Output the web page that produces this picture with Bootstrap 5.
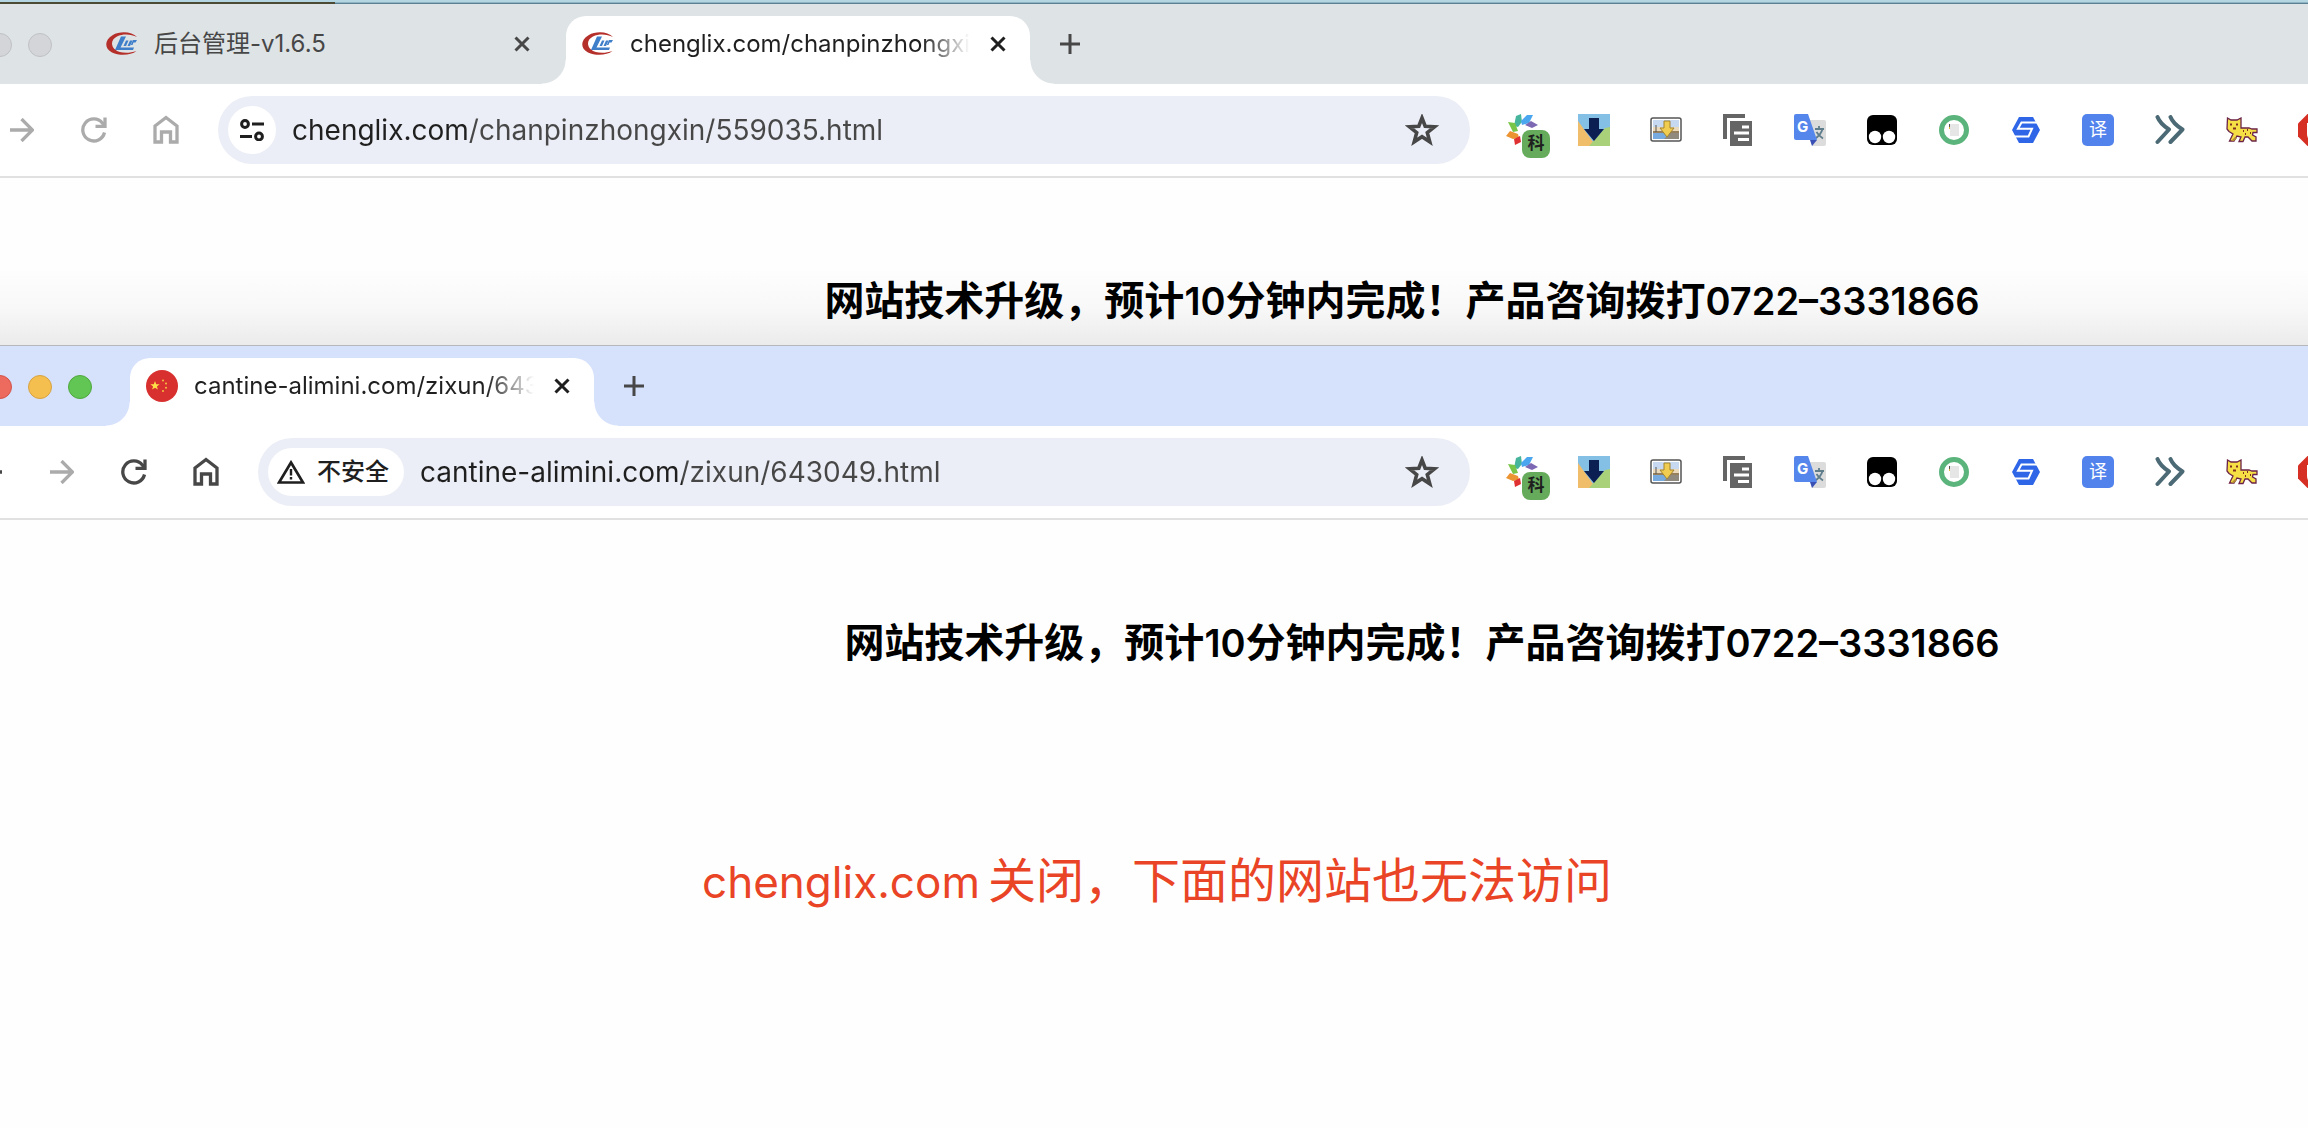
<!DOCTYPE html>
<html lang="zh-CN">
<head>
<meta charset="utf-8">
<meta name="viewport" content="width=device-width, initial-scale=1">
<title>网站技术升级</title>
<link href="https://cdn.jsdelivr.net/npm/bootstrap@5.3.0/dist/css/bootstrap.min.css" rel="stylesheet">
<style>
  body { font-family: Inter, "Noto Sans CJK SC", sans-serif; color: #1f1f1f; background: #fefefe; overflow-x: hidden; }
  button, input { font-family: inherit; }
  svg { display: block; flex: none; }
  .desktop-edge { height: 4px; background: linear-gradient(#b3d6e2 0 2px, #8fb4c2 2px 3px, #5c8192 3px 4px); }
  .desktop-edge span { display: block; width: 335px; height: 4px; background: linear-gradient(#b3d6e2 0 2px, #4d4a33 2px 4px); }
  .browser { overflow: hidden; }
  .tab-strip { height: 80px; padding-top: 12px; background: #dee3e6; }
  .is-front .tab-strip { background: #d6e1fc; }
  .is-front { border-top: 1px solid #b5b7bb; }
  .lights { width: 90px; height: 58px; gap: 16px; padding-right: 38px; flex: none; }
  .is-front .lights { width: 130px; }
  .light { width: 24px; height: 24px; flex: none; border-radius: 50%; border: 1px solid #c0c1c4; background: #d4d5d9; padding: 0; }
  .light.l-red { background: #ed6a5e; border-color: #d1554a; }
  .light.l-amber { background: #f5bf4f; border-color: #d6a243; }
  .light.l-green { background: #61c654; border-color: #51a73e; }
  .b-tab { position: relative; width: 464px; height: 68px; padding: 0 12px 12px 16px; gap: 16px; flex: none; font-size: 24px; line-height: 36px; color: #474747; }
  .b-tab.idle { width: 476px; }
  .b-tab.idle .tab-x { margin-right: 12px; }
  .b-tab.current { background: #fff; border-radius: 20px 20px 0 0; color: #1f1f1f; }
  .b-tab.current::before, .b-tab.current::after { content: ""; position: absolute; bottom: 0; width: 24px; height: 24px; }
  .b-tab.current::before { right: 100%; background: radial-gradient(circle at 0 0, transparent 23px, #fff 24px); }
  .b-tab.current::after { left: 100%; background: radial-gradient(circle at 100% 0, transparent 23px, #fff 24px); }
  .tab-title { flex: 1 1 0; min-width: 0; overflow: hidden; white-space: nowrap; color: inherit; text-decoration: none; }
  .current .tab-title { margin-right: -8px; -webkit-mask-image: linear-gradient(to left, transparent, #000 48px); mask-image: linear-gradient(to left, transparent, #000 48px); }
  .icon-btn { display: flex; align-items: center; justify-content: center; border: 0; padding: 0; background: none; color: #474747; flex: none; }
  .tab-x { width: 40px; height: 40px; color: inherit; }
  .tab-plus { width: 56px; height: 56px; margin-left: 12px; }
  .toolbar { height: 94px; background: #fff; border-bottom: 2px solid #e1e1e1; padding: 12px 0; }
  .nav-keys { margin-left: -86px; }
  .is-front .nav-keys { margin-left: -46px; }
  .nav-keys .icon-btn, .ext-row .icon-btn { width: 72px; height: 68px; }
  .nav-keys .dim { color: #ababab; }
  .omnibox { height: 68px; margin: 0 16px; padding: 0 31px 0 10px; border-radius: 34px; background: #ebeef6; gap: 16px; min-width: 0; }
  .chip { height: 48px; min-width: 48px; border-radius: 24px; background: #fff; color: #1f1f1f; font-size: 24px; line-height: 36px; font-weight: 500; }
  .is-front .chip { padding: 0 15px 0 9px; gap: 12px; }
  .url-box { flex: 1 1 0; min-width: 0; border: 0; padding: 0; outline: 0; height: 48px; font-size: 28px; line-height: 40px;
    color: transparent; -webkit-background-clip: text; background-clip: text; background-image: linear-gradient(to right, #1f1f1f var(--host), #474747 var(--host)); }
  .url-a { --host: 176px; }
  .url-b { --host: 262px; }
  .ext-row { margin-right: -42px; flex: none; }
  .ext-pic { position: relative; }
  .ke-badge { position: absolute; right: -12px; bottom: -12px; width: 28px; height: 28px; border-radius: 8px; background: #66ab5b; color: #1f1f1f; font-size: 17px; line-height: 27px; font-weight: 700; }
  .g-badge { position: absolute; left: 3px; top: 4px; color: #fff; font-size: 15px; line-height: 18px; font-weight: 700; }
  .yi-badge { width: 32px; height: 32px; border-radius: 5px; background: #5283ec; color: #fff; font-size: 18px; line-height: 31px; }
  .web-page { padding-top: 89px; height: 167px; background: linear-gradient(#fefefe 90px, #f8f8f8 130px, #ebebeb 167px); padding-left: 496px; }
  .is-front .web-page { height: auto; background: #fefefe; padding-left: 536px; }
  .notice { font-size: 40px; line-height: 68px; font-weight: 600; color: #000; margin: 0; white-space: nowrap; }
  .notice span { font-size: 38px; }
  .remark { margin: 0; padding: 168px 0 0 6px; font-size: 48px; line-height: 72px; color: #ea4426; white-space: nowrap; }
  .remark span { font-size: 44px; margin-right: 8px; }
</style>
<script src="https://cdn.jsdelivr.net/npm/bootstrap@5.3.0/dist/js/bootstrap.bundle.min.js"></script>
</head>
<body>
<svg width="0" height="0" class="position-absolute" aria-hidden="true">
  <symbol id="i-x" viewBox="0 0 16 16"><path d="M1.500 1.500 14.500 14.500M14.500 1.500 1.500 14.500" stroke="currentColor" stroke-width="3" fill="none"/></symbol>
  <symbol id="i-plus" viewBox="0 0 20 20"><path d="M10 0V20M0 10H20" stroke="currentColor" stroke-width="3" fill="none"/></symbol>
  <symbol id="i-back" viewBox="0 0 24 24"><path d="M24 12H2M12 1 1.500 12 12 23" stroke="currentColor" stroke-width="3.300" fill="none"/></symbol>
  <symbol id="i-fwd" viewBox="0 0 24 24"><path d="M0 12H22M11.500 1 22.500 12 11.500 23" stroke="currentColor" stroke-width="3.300" fill="none"/></symbol>
  <symbol id="i-reload" viewBox="0 0 26 26"><path d="M23.500 15.500A11 11 0 1 1 21.500 6.200L24 9" stroke="currentColor" stroke-width="3.300" fill="none"/><path d="M24 .500V9.300H14.500" stroke="currentColor" stroke-width="3.300" fill="none"/></symbol>
  <symbol id="i-home" viewBox="0 0 26 30"><path d="M2 11 13 2.500 24 11V27H17.500V17H8.500V27H2Z" stroke="currentColor" stroke-width="3.300" fill="none"/></symbol>
  <symbol id="i-tune" viewBox="0 0 24 22"><g stroke="currentColor" stroke-width="3" fill="none"><circle cx="5" cy="5" r="3.400"/><path d="M12 5H24M0 17.500H12"/><circle cx="19" cy="17.500" r="3.400"/></g></symbol>
  <symbol id="i-warn" viewBox="0 0 28 24"><path d="M14 2.500 26 22.500H2Z" stroke="currentColor" stroke-width="2.700" fill="none"/><path d="M14 9V15.500M14 17V19.500" stroke="currentColor" stroke-width="2.400"/></symbol>
  <symbol id="i-star" viewBox="0 0 34 32"><path d="M17 4 20.200 12.200 29.500 12.800 22.300 18.600 24.800 27.800 17 22.700 9.200 27.800 11.700 18.600 4.500 12.800 13.800 12.200Z" stroke="currentColor" stroke-width="3.600" fill="none"/></symbol>
  <symbol id="i-cl" viewBox="0 0 32 24">
    <path d="M31 5C26-.500 14-1.200 6.500 3.200-2 8-1.500 17 6 20.500c7.500 3.600 19 3 24.500-1.500C22 22 13 21 9 17.500 4.500 13.500 5 7.500 11 4.500 17 1.600 25 2 31 5Z" fill="#b5302b"/>
    <path d="M15 4.500H20L14.500 15.500H28L27 18H9Z" fill="#3f7fc9"/>
    <path d="M20 8.500H22.500L20 14H17.500ZM24 8.500H26.500L24 14H21.500ZM27 8H31L29.500 10.500H27.500L26.500 13H24.800Z" fill="#3f7fc9"/>
  </symbol>
  <symbol id="i-cn" viewBox="0 0 32 32"><circle cx="16" cy="16" r="16" fill="#d8302f"/><path d="M9 11 10.200 14.300H13.600L10.900 16.400 11.900 19.600 9 17.700 6.100 19.600 7.100 16.400 4.400 14.300H7.800Z" fill="#fde047"/><g fill="#f5c242"><circle cx="17" cy="10.500" r="1"/><circle cx="20" cy="13.500" r="1"/><circle cx="20" cy="17.800" r="1"/><circle cx="17" cy="21" r="1"/></g></symbol>
  <symbol id="e-petal" viewBox="0 0 32 32">
    <path d="M8 12 10 2 15 0 16 8 12 13Z" fill="#47b59c"/><path d="M15 7 21 1 27 1 23 9 16 11Z" fill="#4aa6ee"/><path d="M19 11 25 7 32 11 26 14Z" fill="#7c68b3"/><path d="M2 8 9 9 12 17 7 18Z" fill="#79c547"/><path d="M0 22 4 17 12 20 13 24 7 25Z" fill="#ec9431"/><path d="M8 25 14 22 15 28 9 31Z" fill="#df3032"/>
  </symbol>
  <symbol id="e-down" viewBox="0 0 32 32"><path d="M0 0H32V32H0Z" fill="#84bfe6"/><path d="M0 7 18 32H0Z" fill="#f0be6b"/><path d="M32 13V32H11L27 14Z" fill="#a9d17a"/><path d="M11 4H21V15H26L16 27 6 15H11Z" fill="#0c1f52"/></symbol>
  <symbol id="e-pic" viewBox="0 0 32 26"><rect x="1" y="1" width="30" height="23" rx="2" fill="#fff" stroke="#555" stroke-width="1.500"/><path d="M3 3H29V13H3Z" fill="#c7d9f0"/><path d="M3 10H29V14H3Z" fill="#ead9bb"/><path d="M3 14H29V17H3Z" fill="#96805e"/><path d="M3 16H14L20 22H3Z" fill="#77aade"/><path d="M14 22 20 16H29V22Z" fill="#8f8a7d"/><path d="M6 8V15" stroke="#555"/><path d="M14 4H20V11H24L17 20 10 11H14Z" fill="#f0cd50" stroke="#a38431"/></symbol>
  <symbol id="e-copy" viewBox="0 0 30 32"><path d="M2 25V2H22" stroke="#656565" stroke-width="4" fill="none"/><path d="M7 7H29V32H7Z" fill="#656565"/><path d="M19 13H26M11 19H26M15 25.500H26" stroke="#fff" stroke-width="2.800"/></symbol>
  <symbol id="e-gt" viewBox="0 0 32 32"><path d="M14 6H30Q32 6 32 8V30Q32 32 30 32H18Z" fill="#dcdcdc"/><path d="M21 15H30M25 12V15M28.500 15Q27 21 20.500 25M22.500 18Q25 22 29 24.500" stroke="#607d8b" stroke-width="1.800" fill="none"/><path d="M16 26H23L18 32Z" fill="#3a50b5"/><path d="M2 0H14L23 26H2Q0 26 0 24V2Q0 0 2 0Z" fill="#5586ec"/></symbol>
  <symbol id="e-tamper" viewBox="0 0 30 30"><rect width="30" height="30" rx="6" fill="#000"/><circle cx="8" cy="22" r="6.200" fill="#fff"/><circle cx="22" cy="22" r="6.200" fill="#fff"/></symbol>
  <symbol id="e-ring" viewBox="0 0 30 30"><circle cx="15" cy="15" r="12.500" fill="#fff" stroke="#5bb47c" stroke-width="5"/><rect x="11" y="9" width="9" height="12" fill="#e6e6e6"/><path d="M10.500 9V12" stroke="#555"/><path d="M10.500 12V14" stroke="#e2b93b"/></symbol>
  <symbol id="e-s" viewBox="0 0 28 28"><path d="M7 1H21L28 14 21 27H7L0 14Z" fill="#2f66e8"/><path d="M26 6.500H9.500L6 12.800H20L16.500 20.500H2" stroke="#fff" stroke-width="2" fill="none"/></symbol>
  <symbol id="e-chev" viewBox="0 0 30 30"><path d="M2.500 2Q5 8.500 14 14.500L2.500 27M15.500 2Q18 8.500 27.500 14.500L15.500 27" stroke="#4c6a75" stroke-width="4" stroke-linecap="round" stroke-linejoin="round" fill="none"/></symbol>
  <symbol id="e-cat" viewBox="0 0 32 26"><path d="M1.500 1 5 3H11L15 1V11H23L26 12H31V15.500H27L26.500 18 30 20V24H26L22 20H19L17 24.500H13L15 20 11 19 8 24H3.500L7 17 3 14.500 1 12Z" fill="#f6df45" stroke="#6b2347" stroke-width="1.300"/><path d="M5 24 9 20 11 21 8 24Z" fill="#b58c34"/><path d="M4 7.500H6M10 7.500H12M7 11.500H10M17 14H18M21 13H22M19 17H20M24 16H25" stroke="#803020" stroke-width="1.800"/></symbol>
  <symbol id="e-block" viewBox="0 0 32 32"><path d="M9.500 0H22.500L32 9.500V22.500L22.500 32H9.500L0 22.500V9.500Z" fill="#d62f24"/><path d="M11 9V20Q11 25 16 25T21 20V9" stroke="#fff" stroke-width="4" fill="none"/></symbol>
</svg>

<div class="desktop-edge"><span></span></div>

<section class="browser">
  <div class="tab-strip d-flex">
    <div class="lights d-flex align-items-center justify-content-end">
      <button class="light" aria-label="关闭"></button><button class="light" aria-label="缩放"></button>
    </div>
    <div class="b-tab idle d-flex align-items-center">
      <svg width="32" height="24"><use href="#i-cl"/></svg>
      <a class="tab-title" href="#">后台管理-v1.6.5</a>
      <button class="icon-btn tab-x" aria-label="关闭标签页"><svg width="16" height="16"><use href="#i-x"/></svg></button>
    </div>
    <div class="b-tab current d-flex align-items-center">
      <svg width="32" height="24"><use href="#i-cl"/></svg>
      <a class="tab-title" href="#">chenglix.com/chanpinzhongxi</a>
      <button class="icon-btn tab-x" aria-label="关闭标签页"><svg width="16" height="16"><use href="#i-x"/></svg></button>
    </div>
    <button class="icon-btn tab-plus" aria-label="新标签页"><svg width="20" height="20"><use href="#i-plus"/></svg></button>
  </div>
  <div class="toolbar d-flex align-items-center">
    <div class="nav-keys d-flex flex-shrink-0">
      <button class="icon-btn dim" aria-label="后退"><svg width="24" height="24"><use href="#i-back"/></svg></button>
      <button class="icon-btn dim" aria-label="前进"><svg width="24" height="24"><use href="#i-fwd"/></svg></button>
      <button class="icon-btn dim" aria-label="刷新"><svg width="26" height="26"><use href="#i-reload"/></svg></button>
      <button class="icon-btn dim" aria-label="主页"><svg width="26" height="30"><use href="#i-home"/></svg></button>
    </div>
    <div class="omnibox d-flex align-items-center flex-grow-1">
      <button class="icon-btn chip" aria-label="网站信息"><svg width="24" height="22"><use href="#i-tune"/></svg></button>
      <input class="url-box url-a" type="text" aria-label="网址" value="chenglix.com/chanpinzhongxin/559035.html">
      <button class="icon-btn" aria-label="收藏"><svg width="34" height="32"><use href="#i-star"/></svg></button>
    </div>
    <div class="ext-row d-flex">
      <button class="icon-btn"><span class="ext-pic"><svg width="32" height="32"><use href="#e-petal"/></svg><span class="ke-badge">科</span></span></button>
      <button class="icon-btn" aria-label="下载"><svg width="32" height="32"><use href="#e-down"/></svg></button>
      <button class="icon-btn" aria-label="图片下载"><svg width="32" height="26"><use href="#e-pic"/></svg></button>
      <button class="icon-btn" aria-label="复制"><svg width="30" height="32"><use href="#e-copy"/></svg></button>
      <button class="icon-btn"><span class="ext-pic"><svg width="32" height="32"><use href="#e-gt"/></svg><span class="g-badge">G</span></span></button>
      <button class="icon-btn" aria-label="脚本"><svg width="30" height="30"><use href="#e-tamper"/></svg></button>
      <button class="icon-btn" aria-label="笔记"><svg width="30" height="30"><use href="#e-ring"/></svg></button>
      <button class="icon-btn" aria-label="S"><svg width="28" height="28"><use href="#e-s"/></svg></button>
      <button class="icon-btn"><span class="yi-badge">译</span></button>
      <button class="icon-btn" aria-label="快进"><svg width="30" height="30"><use href="#e-chev"/></svg></button>
      <button class="icon-btn" aria-label="猎豹"><svg width="32" height="26"><use href="#e-cat"/></svg></button>
      <button class="icon-btn" aria-label="拦截"><svg width="32" height="32"><use href="#e-block"/></svg></button>
    </div>
  </div>
  <main class="web-page text-center">
    <h1 class="notice">网站技术升级，预计<span>10</span>分钟内完成！产品咨询拨打<span>0722–3331866</span></h1>
  </main>
</section>

<section class="browser is-front">
  <div class="tab-strip d-flex">
    <div class="lights d-flex align-items-center justify-content-end">
      <button class="light l-red" aria-label="关闭"></button><button class="light l-amber" aria-label="最小化"></button><button class="light l-green" aria-label="缩放"></button>
    </div>
    <div class="b-tab current d-flex align-items-center">
      <svg width="32" height="32"><use href="#i-cn"/></svg>
      <a class="tab-title" href="#">cantine-alimini.com/zixun/643</a>
      <button class="icon-btn tab-x" aria-label="关闭标签页"><svg width="16" height="16"><use href="#i-x"/></svg></button>
    </div>
    <button class="icon-btn tab-plus" aria-label="新标签页"><svg width="20" height="20"><use href="#i-plus"/></svg></button>
  </div>
  <div class="toolbar d-flex align-items-center">
    <div class="nav-keys d-flex flex-shrink-0">
      <button class="icon-btn" aria-label="后退"><svg width="24" height="24"><use href="#i-back"/></svg></button>
      <button class="icon-btn dim" aria-label="前进"><svg width="24" height="24"><use href="#i-fwd"/></svg></button>
      <button class="icon-btn" aria-label="刷新"><svg width="26" height="26"><use href="#i-reload"/></svg></button>
      <button class="icon-btn" aria-label="主页"><svg width="26" height="30"><use href="#i-home"/></svg></button>
    </div>
    <div class="omnibox d-flex align-items-center flex-grow-1">
      <button class="icon-btn chip"><svg width="28" height="24"><use href="#i-warn"/></svg>不安全</button>
      <input class="url-box url-b" type="text" aria-label="网址" value="cantine-alimini.com/zixun/643049.html">
      <button class="icon-btn" aria-label="收藏"><svg width="34" height="32"><use href="#i-star"/></svg></button>
    </div>
    <div class="ext-row d-flex">
      <button class="icon-btn"><span class="ext-pic"><svg width="32" height="32"><use href="#e-petal"/></svg><span class="ke-badge">科</span></span></button>
      <button class="icon-btn" aria-label="下载"><svg width="32" height="32"><use href="#e-down"/></svg></button>
      <button class="icon-btn" aria-label="图片下载"><svg width="32" height="26"><use href="#e-pic"/></svg></button>
      <button class="icon-btn" aria-label="复制"><svg width="30" height="32"><use href="#e-copy"/></svg></button>
      <button class="icon-btn"><span class="ext-pic"><svg width="32" height="32"><use href="#e-gt"/></svg><span class="g-badge">G</span></span></button>
      <button class="icon-btn" aria-label="脚本"><svg width="30" height="30"><use href="#e-tamper"/></svg></button>
      <button class="icon-btn" aria-label="笔记"><svg width="30" height="30"><use href="#e-ring"/></svg></button>
      <button class="icon-btn" aria-label="S"><svg width="28" height="28"><use href="#e-s"/></svg></button>
      <button class="icon-btn"><span class="yi-badge">译</span></button>
      <button class="icon-btn" aria-label="快进"><svg width="30" height="30"><use href="#e-chev"/></svg></button>
      <button class="icon-btn" aria-label="猎豹"><svg width="32" height="26"><use href="#e-cat"/></svg></button>
      <button class="icon-btn" aria-label="拦截"><svg width="32" height="32"><use href="#e-block"/></svg></button>
    </div>
  </div>
  <main class="web-page text-center">
    <h1 class="notice">网站技术升级，预计<span>10</span>分钟内完成！产品咨询拨打<span>0722–3331866</span></h1>
  </main>
  <p class="remark text-center"><span>chenglix.com</span>关闭，下面的网站也无法访问</p>
</section>
</body>
</html>
